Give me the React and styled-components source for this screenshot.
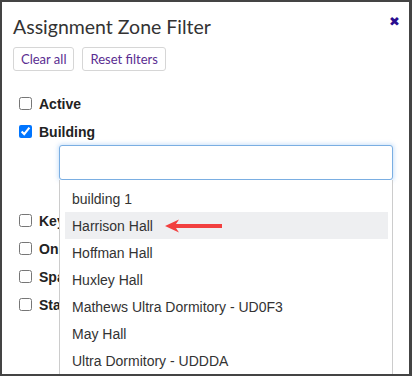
import React from 'react';
import styled, { createGlobalStyle } from 'styled-components';

const GlobalStyle = createGlobalStyle`
  html, body {
    margin: 0;
    padding: 0;
    background: #ffffff;
  }
`;

const filters = [
  { name: 'Active', checked: false },
  { name: 'Building', checked: true, select: true },
  { name: 'Key', checked: false },
  { name: 'Only', checked: false },
  { name: 'Space', checked: false },
  { name: 'Status', checked: false },
];

const buildings = [
  'building 1',
  'Harrison Hall',
  'Hoffman Hall',
  'Huxley Hall',
  'Mathews Ultra Dormitory - UD0F3',
  'May Hall',
  'Ultra Dormitory - UDDDA',
];

function App() {
  return (
    <>
      <GlobalStyle />
      <Modal>
        <Header>
          <Title>Assignment Zone Filter</Title>
          <CloseButton aria-label="close">✖</CloseButton>
        </Header>
        <Actions>
          <ActionButton>Clear all</ActionButton>
          <ActionButton>Reset filters</ActionButton>
        </Actions>
        <FilterList>
          {filters.map((f) => (
            <FilterItem key={f.name} $withSelect={f.select}>
              <FilterLabel>
                <Checkbox type="checkbox" defaultChecked={f.checked} />
                <span>{f.name}</span>
              </FilterLabel>
              {f.select && (
                <SelectWrap>
                  <SearchInput type="text" />
                  <Dropdown>
                    {buildings.map((b) => (
                      <Option key={b} $active={b === 'Harrison Hall'}>
                        {b}
                        {b === 'Harrison Hall' && (
                          <Arrow width="58" height="14" viewBox="0 0 58 14">
                            <path d="M0 7 L14 0.5 L11 5 L57 5 L57 9 L11 9 L14 13.5 Z" fill="#f2403f" />
                          </Arrow>
                        )}
                      </Option>
                    ))}
                  </Dropdown>
                </SelectWrap>
              )}
            </FilterItem>
          ))}
        </FilterList>
      </Modal>
    </>
  );
}

const Modal = styled.div`
  box-sizing: border-box;
  width: 412px;
  height: 376px;
  overflow: hidden;
  border: 2px solid #444444;
  border-right-width: 3px;
  background: #ffffff;
  padding: 14px 11px 0 11px;
  font-family: 'Liberation Sans', Arial, sans-serif;
`;

const Header = styled.div`
  display: flex;
  align-items: flex-start;
  justify-content: space-between;
`;

const Title = styled.h2`
  margin: 0;
  font-family: Lato, 'Open Sans', sans-serif;
  font-weight: 400;
  font-size: 19.5px;
  line-height: 22px;
  color: #333333;
`;

const CloseButton = styled.button`
  border: none;
  background: none;
  padding: 0;
  margin: -1px -2px 0 0;
  font-size: 13px;
  line-height: 14px;
  color: #2a0d8f;
  cursor: pointer;
`;

const Actions = styled.div`
  display: flex;
  gap: 8px;
  margin-top: 9px;
`;

const ActionButton = styled.button`
  height: 24px;
  padding: 0 7px;
  border: 1px solid #d6d6d6;
  border-radius: 3px;
  background: #ffffff;
  font-family: Lato, 'Open Sans', sans-serif;
  font-size: 13px;
  color: #5a2d91;
  cursor: pointer;
`;

const FilterList = styled.ul`
  list-style: none;
  margin: 23px 0 0 0;
  padding: 0 0 0 6px;
`;

const FilterItem = styled.li`
  margin-bottom: ${(p) => (p.$withSelect ? '31px' : '9px')};
`;

const FilterLabel = styled.label`
  display: flex;
  align-items: center;
  gap: 7px;
  height: 19px;
  font-size: 14px;
  font-weight: 700;
  color: #222222;
`;

const Checkbox = styled.input`
  width: 13px;
  height: 13px;
  margin: 0;
`;

const SelectWrap = styled.div`
  position: relative;
  margin: 4px 0 0 40px;
  width: 334px;
`;

const SearchInput = styled.input`
  box-sizing: border-box;
  display: block;
  width: 100%;
  height: 35px;
  border: 1px solid #7aaee2;
  border-radius: 3px;
  outline: none;
  box-shadow: 0 0 4px 1px rgba(102, 170, 238, 0.35);
  background: #ffffff;
`;

const Dropdown = styled.ul`
  position: absolute;
  top: 35px;
  left: 0;
  right: 0;
  z-index: 10;
  list-style: none;
  margin: 0;
  padding: 5px 4px 0 5px;
  background: #ffffff;
  border-left: 1px solid #cccccc;
  border-right: 1px solid #cccccc;
  height: 220px;
`;

const Option = styled.li`
  position: relative;
  display: flex;
  align-items: center;
  height: 27px;
  padding-left: 7px;
  font-family: 'Liberation Sans', Arial, sans-serif;
  font-size: 14px;
  color: #333333;
  background: ${(p) => (p.$active ? '#eeeff1' : 'transparent')};
`;

const Arrow = styled.svg`
  position: absolute;
  left: 100px;
  top: 7px;
`;

export default App;
